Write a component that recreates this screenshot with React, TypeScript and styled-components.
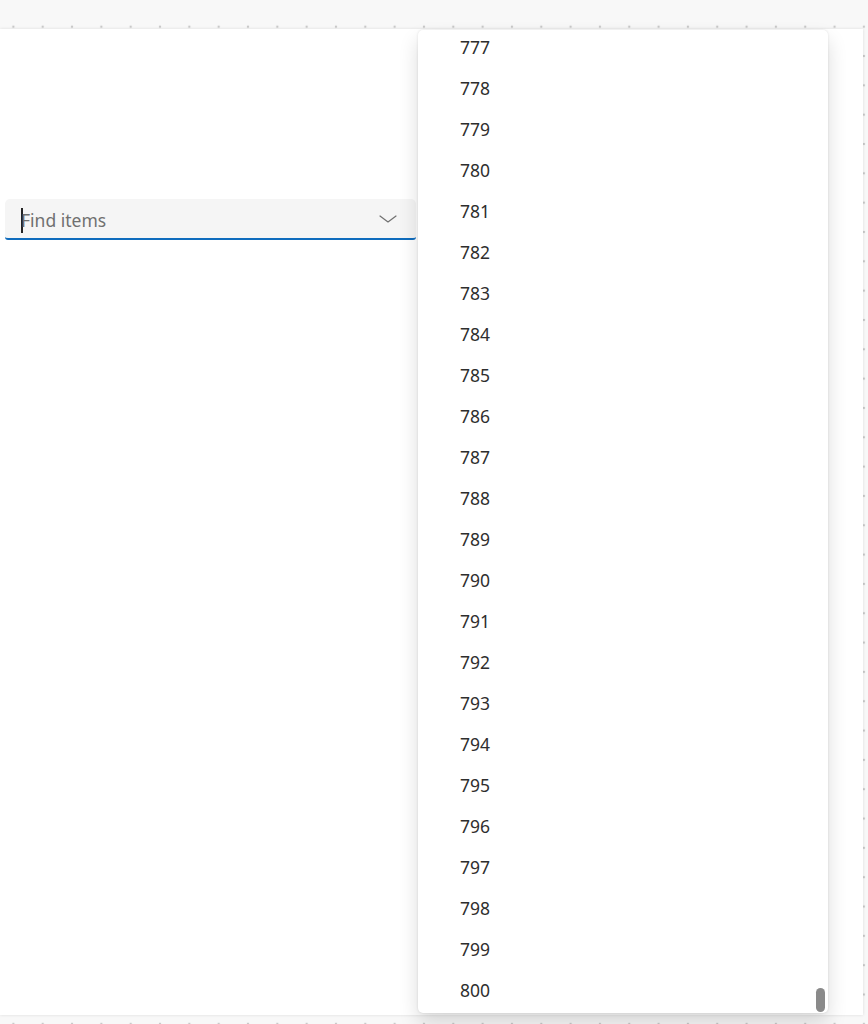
import React, { useLayoutEffect, useRef, useState } from "react";
import styled, { createGlobalStyle } from "styled-components";

const GlobalStyle = createGlobalStyle`
  html, body {
    margin: 0;
    padding: 0;
  }

  body {
    min-height: 1024px;
    overflow: hidden;
    background-color: #f8f8f8;
    background-image: radial-gradient(circle, #c9c9c9 0.9px, transparent 1.6px);
    background-size: 29.33px 29.33px;
    background-position: -1.3px 12px;
    font-family: "Noto Sans", "Open Sans", sans-serif;
  }
`;

const Canvas = styled.div`
  margin-top: 29px;
  width: 863px;
  height: 986px;
  background: #ffffff;
  box-shadow: 0 0 3px rgba(0, 0, 0, 0.12);
  padding: 170px 0 0 5px;
  box-sizing: border-box;
`;

const ComboWrap = styled.div`
  position: relative;
  width: 411px;
`;

const Field = styled.div`
  display: flex;
  align-items: center;
  height: 41px;
  box-sizing: border-box;
  padding: 0 19px 0 16px;
  background: #f5f5f5;
  border-radius: 5px 5px 3px 3px;
  border-bottom: 2.5px solid #0f6cbd;
`;

const Input = styled.div`
  flex: 1;
  display: flex;
  align-items: center;
  padding-top: 4px;
  font-size: 17.5px;
  color: #707070;
  line-height: 25px;
`;

const Caret = styled.span`
  display: inline-block;
  width: 1.5px;
  height: 25px;
  margin-right: -1.5px;
  background: #242424;
`;

const Chevron = styled.svg`
  width: 18px;
  height: 8px;
  flex: none;
  margin-top: 1px;
`;

const Popup = styled.div`
  position: absolute;
  left: 413px;
  top: -169px;
  width: 410px;
  height: 983px;
  background: #ffffff;
  border-radius: 5px;
  box-shadow: 0 0 2.5px rgba(0, 0, 0, 0.12), 0 10px 20px rgba(0, 0, 0, 0.14);
  overflow: hidden;
`;

const Listbox = styled.div`
  height: 100%;
  box-sizing: border-box;
  padding: 3px 0;
  overflow-y: auto;
  scrollbar-width: none;

  &::-webkit-scrollbar {
    display: none;
  }
`;

const Spacer = styled.div`
  flex: none;
`;

const Option = styled.div`
  height: 41px;
  display: flex;
  align-items: center;
  padding-left: 42px;
  font-size: 17.5px;
  color: #2e2e2e;
`;

const Thumb = styled.div`
  position: absolute;
  right: 3px;
  width: 9px;
  height: 24px;
  border-radius: 5px;
  background: #8a8a8a;
`;

const TOTAL = 800;
const ROW = 41;
const FIRST_SHOWN = 777;
const THUMB_H = 24;
const THUMB_PAD = 1;

const App = () => {
  const listRef = useRef<HTMLDivElement>(null);
  const [thumbTop, setThumbTop] = useState(0);

  useLayoutEffect(() => {
    const el = listRef.current;
    if (!el) return;
    el.scrollTop = el.scrollHeight;
    const track = el.clientHeight - THUMB_PAD * 2;
    const max = el.scrollHeight - el.clientHeight;
    setThumbTop(THUMB_PAD + (max > 0 ? el.scrollTop / max : 0) * (track - THUMB_H));
  }, []);

  const shown = Array.from(
    { length: TOTAL - FIRST_SHOWN + 1 },
    (_, i) => FIRST_SHOWN + i
  );

  return (
    <>
      <GlobalStyle />
      <Canvas>
        <ComboWrap>
          <Field>
            <Input>
              <Caret />
              Find items
            </Input>
            <Chevron viewBox="0 0 18 8">
              <polyline
                points="1,1 9,7 17,1"
                fill="none"
                stroke="#707070"
                strokeWidth="1.2"
                strokeLinecap="round"
                strokeLinejoin="round"
              />
            </Chevron>
          </Field>
          <Popup>
            <Listbox ref={listRef} role="listbox">
              <Spacer style={{ height: (FIRST_SHOWN - 1) * ROW }} />
              {shown.map((n) => (
                <Option key={n} role="option">
                  {n}
                </Option>
              ))}
            </Listbox>
            <Thumb style={{ top: thumbTop }} />
          </Popup>
        </ComboWrap>
      </Canvas>
    </>
  );
};

export default App;
